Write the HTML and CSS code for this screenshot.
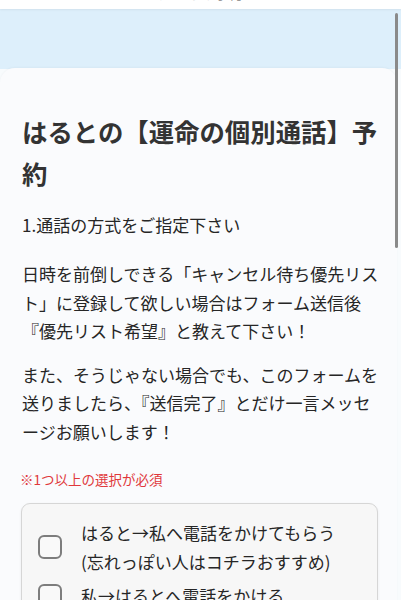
FILE: index.html
```html
<!DOCTYPE html>
<html lang="ja">
<head>
<meta charset="utf-8">
<link rel="stylesheet" href="styles.css">
</head>
<body>
<div class="topbar"><span class="topbar-text">はるとの予約</span></div>
<div class="hero"></div>
<main class="card">
  <h1 class="title">はるとの【運命の個別通話】予約</h1>
  <p class="label">1.通話の方式をご指定下さい</p>
  <div class="desc">
    <p>日時を前倒しできる「キャンセル待ち優先リスト」に登録して欲しい場合はフォーム送信後『優先リスト希望』と教えて下さい！</p>
    <p>また、そうじゃない場合でも、このフォームを送りましたら、『送信完了』とだけ一言メッセージお願いします！</p>
  </div>
  <p class="required">※1つ以上の選択が必須</p>
  <div class="options">
    <label class="option">
      <span class="check"></span>
      <span class="option-text">はると→私へ電話をかけてもらう<br>(忘れっぽい人はコチラおすすめ)</span>
    </label>
    <label class="option">
      <span class="check"></span>
      <span class="option-text">私→はるとへ電話をかける</span>
    </label>
  </div>
</main>
<div class="scrollbar"></div>
</body>
</html>
```
FILE: styles.css
```css
html, body {
  margin: 0;
  padding: 0;
}
body {
  background: #f8fbfd;
  font-family: "Noto Sans CJK JP", "Noto Sans", sans-serif;
  color: #262626;
  width: 401px;
  height: 600px;
  overflow: hidden;
  position: relative;
}
.topbar {
  height: 9px;
  background: #ffffff;
  overflow: hidden;
  box-shadow: 0 1px 2px rgba(0,0,0,0.06);
  position: relative;
  z-index: 1;
  display: flex;
  justify-content: center;
}
.topbar-text {
  font-size: 14px;
  line-height: 14px;
  margin-top: -14px;
  color: #9a9a9a;
}
.hero {
  height: 60px;
  background: #ddeffb;
}
.card {
  background: #fafbfd;
  margin-top: -1px;
  margin-right: 4px;
  border-radius: 15px 15px 0 0;
  padding: 42px 15px 0 22px;
  height: 600px;
  box-shadow: 0 -1px 2px rgba(0,0,0,0.03);
}
.title {
  margin: 0;
  font-size: 25.4px;
  line-height: 42px;
  font-weight: 700;
  color: #333333;
}
.label {
  margin: 16px 0 0;
  font-size: 17px;
  line-height: 29px;
}
.desc {
  margin-top: 21px;
  font-size: 17px;
  line-height: 28.5px;
}
.desc p {
  margin: 0 0 15px;
}
.desc p:last-child {
  margin-bottom: 0;
}
.required {
  margin: 21px 0 0 -2px;
  font-size: 13.5px;
  line-height: 24px;
  color: #e0383b;
}
.options {
  margin: 12px 4px 0 -1px;
  border: 1px solid #d6d6d6;
  border-radius: 9px;
  background: #f7f7f7;
  box-shadow: 0 1px 3px rgba(0,0,0,0.06);
  padding: 14px 16px;
  display: flex;
  flex-direction: column;
  gap: 5px;
}
.option {
  display: flex;
  align-items: center;
  gap: 19px;
  font-size: 17px;
  line-height: 29px;
}
.check {
  flex: none;
  width: 20px;
  height: 20px;
  border: 2.5px solid #7d7d7d;
  border-radius: 6px;
  background: #f9f9f9;
}
.scrollbar {
  position: absolute;
  left: 395px;
  top: 13px;
  width: 3px;
  height: 235px;
  border-radius: 2px;
  background: #8a8a8a;
}
```
